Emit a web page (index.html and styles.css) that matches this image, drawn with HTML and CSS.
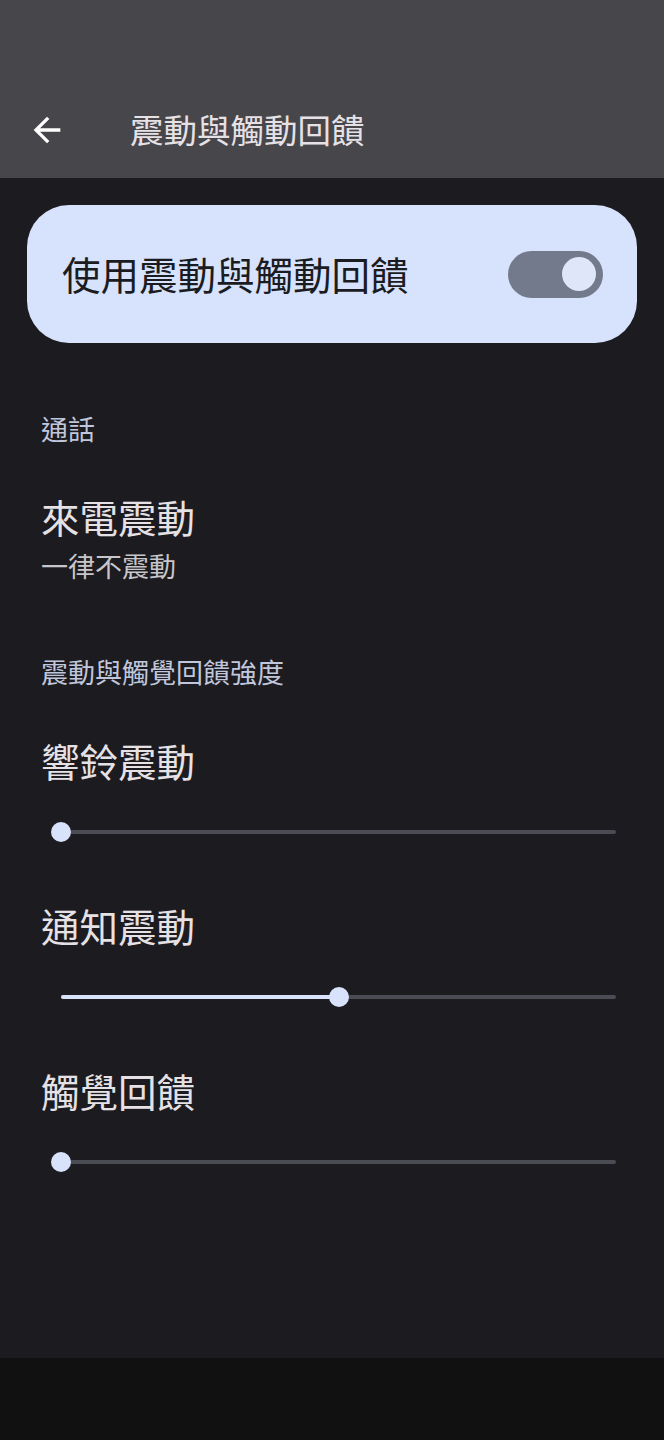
FILE: index.html
```html
<!DOCTYPE html>
<html lang="zh-Hant">
<head>
<meta charset="UTF-8">
<meta name="viewport" content="width=device-width, initial-scale=1.0">
<title>震動與觸動回饋</title>
<link rel="stylesheet" href="styles.css">
</head>
<body>
<header class="app-bar">
  <button class="back-btn" aria-label="返回">
    <svg viewBox="0 0 24 24" width="40" height="40"><path fill="#ffffff" d="M20 11H7.83l5.59-5.59L12 4l-8 8 8 8 1.41-1.41L7.83 13H20v-2z"/></svg>
  </button>
  <h1 class="app-title">震動與觸動回饋</h1>
</header>

<main class="content">
  <div class="main-switch">
    <span class="main-switch-label">使用震動與觸動回饋</span>
    <span class="toggle"><span class="toggle-thumb"></span></span>
  </div>

  <div class="section-title first">通話</div>
  <div class="pref">
    <div class="pref-title">來電震動</div>
    <div class="pref-summary">一律不震動</div>
  </div>

  <div class="section-title">震動與觸覺回饋強度</div>

  <div class="pref slider-pref">
    <div class="pref-title">響鈴震動</div>
    <div class="slider">
      <div class="slider-track"></div>
      <div class="slider-active" style="width: 0%"></div>
      <div class="slider-thumb" style="left: 0%"></div>
    </div>
  </div>

  <div class="pref slider-pref">
    <div class="pref-title">通知震動</div>
    <div class="slider">
      <div class="slider-track"></div>
      <div class="slider-active" style="width: 50%"></div>
      <div class="slider-thumb" style="left: 50%"></div>
    </div>
  </div>

  <div class="pref slider-pref">
    <div class="pref-title">觸覺回饋</div>
    <div class="slider">
      <div class="slider-track"></div>
      <div class="slider-active" style="width: 0%"></div>
      <div class="slider-thumb" style="left: 0%"></div>
    </div>
  </div>
</main>

<footer class="nav-bar"></footer>
</body>
</html>
```

FILE: styles.css
```css
:root {
  --fundo: #1c1b1f;
  --barra-topo: #47464b;
  --barra-baixo: #111111;
  --texto: #e6e1e5;
  --texto-sub: #c7c6ca;
  --texto-secao: #c0c7dc;
  --cartao: #d7e2fc;
  --toggle-trilho: #737a8c;
  --toggle-botao: #dfe6f9;
  --slider-trilho: #4b4b53;
  --slider-ativo: #d8e2fb;
}

body {
  margin: 0;
  background: var(--fundo);
  color: var(--texto);
  font-family: "Noto Sans CJK TC", "Noto Sans", sans-serif;
  min-height: 100vh;
  display: flex;
  flex-direction: column;
}

.app-bar {
  background: var(--barra-topo);
  height: 96px;
  padding-top: 82px;
  display: flex;
  align-items: center;
}

.back-btn {
  background: none;
  border: none;
  padding: 0;
  margin-left: 27px;
  width: 40px;
  height: 40px;
  display: flex;
}

.app-title {
  margin: -2px 0 0 63px;
  font-size: 33.5px;
  font-weight: normal;
  line-height: 44px;
  color: var(--texto);
}

.content {
  flex: 1;
  padding: 27px 27px 0;
}

.main-switch {
  background: var(--cartao);
  border-radius: 42px;
  height: 138px;
  padding: 0 34px 0 35px;
  display: flex;
  align-items: center;
  justify-content: space-between;
  box-sizing: border-box;
}

.main-switch-label {
  font-size: 38.5px;
  line-height: 48px;
  margin-top: -3px;
  color: #1a1c22;
}

.toggle {
  width: 95px;
  height: 47px;
  border-radius: 24px;
  background: var(--toggle-trilho);
  display: flex;
  align-items: center;
  justify-content: flex-end;
  padding-right: 7px;
  box-sizing: border-box;
}

.toggle-thumb {
  width: 34px;
  height: 34px;
  border-radius: 50%;
  background: var(--toggle-botao);
}

.section-title {
  font-size: 27px;
  line-height: 36px;
  padding-left: 14px;
  color: var(--texto-secao);
  margin-top: 70px;
}

.section-title.first {
  margin-top: 68px;
}

.pref {
  padding-left: 14px;
  margin-top: 45px;
}

.pref-title {
  font-size: 38.5px;
  line-height: 48px;
  color: var(--texto);
}

.pref-summary {
  font-size: 27px;
  line-height: 36px;
  margin-top: 8px;
  color: var(--texto-sub);
}

.slider-pref {
  margin-top: 46px;
}

.slider-pref + .slider-pref {
  margin-top: 49px;
}

.slider {
  position: relative;
  height: 40px;
  margin: 28px 21px 0 20px;
}

.slider-track {
  position: absolute;
  left: 0;
  right: 0;
  top: 18px;
  height: 4px;
  border-radius: 2px;
  background: var(--slider-trilho);
}

.slider-active {
  position: absolute;
  left: 0;
  top: 18px;
  height: 4px;
  border-radius: 2px;
  background: var(--slider-ativo);
}

.slider-thumb {
  position: absolute;
  top: 10px;
  width: 20px;
  height: 20px;
  margin-left: -10px;
  border-radius: 50%;
  background: var(--slider-ativo);
}

.nav-bar {
  height: 82px;
  background: var(--barra-baixo);
}
```
